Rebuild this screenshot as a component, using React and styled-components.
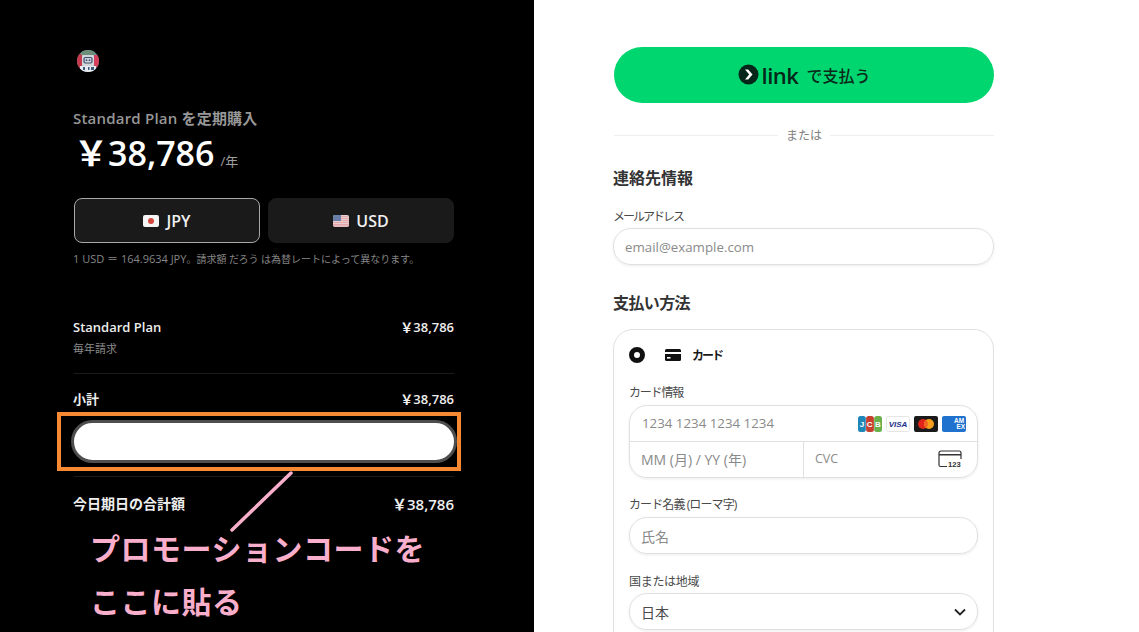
import React from "react";
import styled, { createGlobalStyle } from "styled-components";

const Global = createGlobalStyle`
  html, body { margin: 0; padding: 0; background: #fff; }
  body { font-family: "Open Sans", "Noto Sans CJK JP", sans-serif; }
  * { box-sizing: border-box; }
`;
const Page = styled.div`
  display: grid; grid-template-columns: 534px 1fr; width: 1139px; height: 632px; overflow: hidden;
`;
const Left = styled.section`
  background: #000; color: #fff; padding: 50px 80px 0 74px; height: 632px; position: relative;
`;
const Right = styled.section`
  background: #fff; padding: 47px 145px 0 80px; color: #1a1a1a; height: 632px; overflow: hidden;
`;
const AvatarWrap = styled.div`
  width: 22px; height: 22px; margin-left: 3px;
  svg { display: block; }
`;
const PlanTitle = styled.div`
  margin: 36px 0 0 -1px; height: 20px; line-height: 20px; font-size: 15px; font-weight: 600; letter-spacing: 0.2px; color: #979797;
`;
const PriceRow = styled.div`
  display: flex; align-items: baseline; margin: 5px 0 0 0; height: 40px; line-height: 40px;
`;
const Price = styled.span`
  font-size: 34px; font-weight: 600;
`;
const Per = styled.span`
  font-size: 13px; color: #a0a0a0; margin-left: 6px;
`;
const Toggle = styled.div`
  display: grid; grid-template-columns: 186px 186px; gap: 8px; margin-top: 25px;
`;
const Currency = styled.div`
  height: 45px; border-radius: 8px; background: #1a1a1a; display: flex; align-items: center; justify-content: center; gap: 7px;
  border: 1px solid ${p => (p.$active ? "#a8a8a8" : "#1a1a1a")};
  font-size: 16px; font-weight: 600; color: #f0f0f0;
  svg { display: block; }
`;
const Rate = styled.div`
  margin: 8px 0 0 -1px; height: 16px; line-height: 16px; font-size: 11px; color: #868686; white-space: nowrap;
`;
const RateCjk = styled.span`
  font-size: 10px;
`;
const LineRow = styled.div`
  display: flex; justify-content: space-between; align-items: center; height: 20px; line-height: 20px; margin-left: -1px;
  font-size: ${p => (p.$big ? 14 : 13)}px; font-weight: 600; color: #eee; margin-top: ${p => p.$top || 0}px;
`;
const Total = styled.span`
  font-size: 15px;
`;
const Sub = styled.div`
  font-size: 11px; color: #8b8b8b; margin: 4px 0 0 -1px; height: 16px; line-height: 16px;
`;
const Rule = styled.div`
  height: 1px; background: #1c1c1c; margin-top: ${p => p.$top}px;
`;
const Callout = styled.div`
  margin: 3px 0 0 -17px; height: 59px; border: 4px solid #f58a33; padding: 4px 0 0 10px; width: 404px;
`;
const PromoInput = styled.div`
  width: 386px; height: 43px; border-radius: 22px; background: #fff; border: 3px solid #4e4e4e;
`;
const Pointer = styled.svg`
  position: absolute; left: 228px; top: 470px; display: block;
`;
const Note = styled.div`
  position: absolute; left: 90px; top: 522px; font-size: 30px; letter-spacing: 0.5px; line-height: 53px; font-weight: 700; color: #f9afcb; white-space: nowrap;
`;
const LinkButton = styled.div`
  height: 56px; border-radius: 28px; background: #00d66f; display: flex; align-items: center; justify-content: center; gap: 3px; color: #0b2a1a; padding-bottom: 1px;
  svg { display: block; }
`;
const LinkWord = styled.span`
  font-size: 22px; font-weight: 600; color: #05271a; letter-spacing: -0.5px; line-height: 1;
`;
const LinkRest = styled.span`
  font-size: 16px; font-weight: 500; margin-left: 5px;
`;
const Or = styled.div`
  display: flex; align-items: center; gap: 8px; margin-top: 22px; height: 20px; font-size: 12px; color: #808080;
  &::before, &::after { content: ""; flex: 1; height: 1px; background: #eeeeee; }
`;
const Heading = styled.h2`
  margin: ${p => p.$top}px 0 0 -1px; height: 22px; line-height: 22px; font-size: 16px; font-weight: 600; color: #333;
  letter-spacing: ${p => p.$tight || 0}px;
`;
const Label = styled.div`
  font-size: 12px; height: 16px; line-height: 16px; color: #4a4a4a; margin-top: ${p => p.$top}px; white-space: nowrap;
  margin-left: ${p => p.$left || 0}px; letter-spacing: ${p => p.$tight || 0}px;
`;
const Input = styled.div`
  height: 37px; margin-top: ${p => p.$gap}px; border-radius: 18px; border: 1px solid #e0e0e0; box-shadow: 0 1px 3px rgba(0,0,0,.08);
  display: flex; align-items: center; justify-content: space-between; padding: ${p => (p.$latin ? "1px 11px 0 11px" : "0 11px")};
  font-size: ${p => (p.$latin ? 13.3 : 14)}px; color: #8a8a8a; margin-left: ${p => p.$left || 0}px;
`;
const PayBox = styled.div`
  margin: 15px 0 0 -1px; border: 1px solid #e0e0e0; border-radius: 20px; padding: 15px 15px 0; height: 340px;
`;
const PayHead = styled.div`
  display: flex; align-items: center; height: 20px;
  svg { display: block; }
`;
const PayName = styled.span`
  margin-left: 11px; font-size: 12px; letter-spacing: -2px; font-weight: 600; color: #1a1a1a;
`;
const Radio = styled.div`
  width: 16px; height: 16px; border-radius: 50%; border: 5px solid #111; margin-right: 20px;
`;
const CardGroup = styled.div`
  margin-top: 4px; border: 1px solid #e0e0e0; border-radius: 18px; box-shadow: 0 1px 3px rgba(0,0,0,.08); height: 73px; display: grid; grid-template-rows: 36px 36px; font-size: 14px; color: #8a8a8a;
`;
const CardTop = styled.div`
  display: flex; align-items: center; justify-content: space-between; padding: 0 11px 0 12px; border-bottom: 1px solid #e0e0e0;
`;
const CardNumber = styled.span`
  font-size: 13.3px; padding-bottom: 1px;
`;
const CardBottom = styled.div`
  display: grid; grid-template-columns: 173px 1fr;
`;
const Cell = styled.div`
  display: flex; align-items: center; justify-content: space-between; padding: 0 15px 3px 11px;
  & + & { border-left: 1px solid #e0e0e0; font-size: 12.5px; }
  svg { display: block; }
`;
const Logos = styled.div`
  display: flex; gap: 4px;
  svg { display: block; }
`;
const Value = styled.span`
  color: #4a4a4a;
`;

const Avatar = () => (
  <svg width="22" height="22" viewBox="0 0 22 22">
    <defs><clipPath id="av"><circle cx="11" cy="11" r="11" /></clipPath></defs>
    <g clipPath="url(#av)">
      <rect width="22" height="22" fill="#6d92a8" />
      <path d="M0 4h5v14H0z" fill="#c43a4c" />
      <path d="M17 5h5v12h-5z" fill="#d6405c" />
      <path d="M4 0h14v5H4z" fill="#6d8f78" />
      <rect x="5" y="5" width="12" height="11" rx="1" fill="#d2d5da" />
      <rect x="7" y="7.5" width="8" height="5.5" rx="1.5" fill="none" stroke="#3a4d70" strokeWidth="1.2" />
      <circle cx="9.5" cy="10.2" r=".9" fill="#3a4d70" />
      <circle cx="12.5" cy="10.2" r=".9" fill="#3a4d70" />
      <path d="M3 16h16v6H3z" fill="#e8eaef" />
      <path d="M6 17h2v3H6zM11 17h1.5v3H11zM14 17h3v3h-3z" fill="#3b5b7c" />
    </g>
  </svg>
);
const JpFlag = () => (
  <svg width="16" height="12" viewBox="0 0 16 12">
    <rect width="16" height="12" rx="2" fill="#f5f5f5" />
    <circle cx="8" cy="6" r="3" fill="#d5483f" />
  </svg>
);
const UsFlag = () => (
  <svg width="16" height="12" viewBox="0 0 16 12">
    <rect width="16" height="12" rx="2" fill="#f3f0f0" />
    <path d="M1 1.2h14M0 3.2h16M0 5.2h16M0 7.2h16M0 9.2h16M1 11h14" stroke="#d9868a" strokeWidth="1" />
    <path d="M2 0h6v6H0V2a2 2 0 0 1 2-2z" fill="#6a7fa8" />
  </svg>
);
const LinkMark = () => (
  <svg width="21" height="21" viewBox="0 0 21 21">
    <circle cx="10.5" cy="10.5" r="10" fill="#05271a" />
    <path d="M7 5.5h3.2l4.3 5-4.3 5H7l4.2-5z" fill="#fff" />
  </svg>
);
const CardIcon = () => (
  <svg width="16" height="12" viewBox="0 0 16 12">
    <path d="M1.5 0h13A1.5 1.5 0 0 1 16 1.5V3H0V1.5A1.5 1.5 0 0 1 1.5 0z" fill="#111" />
    <path d="M0 5h16v5.5a1.5 1.5 0 0 1-1.5 1.5h-13A1.5 1.5 0 0 1 0 10.5z" fill="#111" />
    <rect x="2" y="8" width="3.5" height="1.6" fill="#fff" />
  </svg>
);
const Jcb = () => (
  <svg width="24" height="16" viewBox="0 0 24 16" fontFamily="Liberation Sans" fontWeight="700" fontSize="8" fill="#fff">
    <rect x="0" y="0" width="7.8" height="16" rx="2.5" fill="#1f87b8" />
    <rect x="8.1" y="0" width="7.8" height="16" rx="2.5" fill="#c7402e" />
    <rect x="16.2" y="0" width="7.8" height="16" rx="2.5" fill="#6ab04c" />
    <text x="1.8" y="11">J</text>
    <text x="8.8" y="11">C</text>
    <text x="17" y="11">B</text>
  </svg>
);
const Visa = () => (
  <svg width="24" height="16" viewBox="0 0 24 16">
    <rect x=".5" y=".5" width="23" height="15" rx="2" fill="#fff" stroke="#e6e6e6" />
    <text x="12" y="11" textAnchor="middle" fontFamily="Liberation Sans" fontWeight="700" fontStyle="italic" fontSize="8" fill="#1a2f8a">VISA</text>
  </svg>
);
const Master = () => (
  <svg width="24" height="16" viewBox="0 0 24 16">
    <rect width="24" height="16" rx="2" fill="#1a1a1a" />
    <circle cx="9" cy="8" r="5" fill="#e2231a" />
    <circle cx="15" cy="8" r="5" fill="#f79e1b" />
    <path d="M12 4a5 5 0 0 1 0 8 5 5 0 0 1 0-8z" fill="#f26522" />
  </svg>
);
const Amex = () => (
  <svg width="24" height="16" viewBox="0 0 24 16" fontFamily="Liberation Sans" fontWeight="700" fontSize="6.5" fill="#fff">
    <rect width="24" height="16" rx="2" fill="#1f72cd" />
    <text x="12" y="7.2">AM</text>
    <text x="14.5" y="13.4">EX</text>
  </svg>
);
const Cvc = () => (
  <svg width="24" height="18" viewBox="0 0 24 18">
    <path d="M9 16.5H2.5A1.5 1.5 0 0 1 1 15V3a2 2 0 0 1 2-2h18a2 2 0 0 1 2 2v6" fill="none" stroke="#333" strokeWidth="1.2" />
    <rect x="1" y="4" width="22" height="1.5" fill="#333" />
    <text x="10" y="17" fontSize="7.6" fontWeight="700" fontFamily="Liberation Sans" fill="#333">123</text>
  </svg>
);
const Chevron = () => (
  <svg width="12" height="8" viewBox="0 0 12 8">
    <path d="M1 1.5l5 5 5-5" fill="none" stroke="#222" strokeWidth="1.8" />
  </svg>
);

export default function App() {
  return (
    <Page>
      <Global />
      <Left>
        <AvatarWrap><Avatar /></AvatarWrap>
        <PlanTitle>Standard Plan を定期購入</PlanTitle>
        <PriceRow><Price>￥38,786</Price><Per>/年</Per></PriceRow>
        <Toggle>
          <Currency $active><JpFlag />JPY</Currency>
          <Currency><UsFlag />USD</Currency>
        </Toggle>
        <Rate>1 USD ＝ 164.9634 JPY<RateCjk>。請求額 だろう は為替レートによって異なります。</RateCjk></Rate>
        <LineRow $top={50}><span>Standard Plan</span><span>￥38,786</span></LineRow>
        <Sub>毎年請求</Sub>
        <Rule $top={16} />
        <LineRow $top={15}><span>小計</span><span>￥38,786</span></LineRow>
        <Callout><PromoInput /></Callout>
        <Rule $top={5} />
        <LineRow $big $top={17}><span>今日期日の合計額</span><Total>￥38,786</Total></LineRow>
        <Pointer width="66" height="64" viewBox="0 0 66 64">
          <path d="M63 3L4 60" stroke="#f9afcb" strokeWidth="3.5" strokeLinecap="round" fill="none" />
        </Pointer>
        <Note>プロモーションコードを<br />ここに貼る</Note>
      </Left>
      <Right>
        <LinkButton><LinkMark /><LinkWord>link</LinkWord><LinkRest>で支払う</LinkRest></LinkButton>
        <Or>または</Or>
        <Heading $top={22}>連絡先情報</Heading>
        <Label $top={20} $left={-1} $tight={-2}>メールアドレス</Label>
        <Input $gap={3} $latin $left={-1}>email@example.com</Input>
        <Heading $top={27} $tight={-0.6}>支払い方法</Heading>
        <PayBox>
          <PayHead><Radio /><CardIcon /><PayName>カード</PayName></PayHead>
          <Label $top={20} $tight={-1.2}>カード情報</Label>
          <CardGroup>
            <CardTop>
              <CardNumber>1234 1234 1234 1234</CardNumber>
              <Logos><Jcb /><Visa /><Master /><Amex /></Logos>
            </CardTop>
            <CardBottom>
              <Cell>MM (月) / YY (年)</Cell>
              <Cell>CVC<Cvc /></Cell>
            </CardBottom>
          </CardGroup>
          <Label $top={19} $tight={-0.9}>カード名義 (ローマ字)</Label>
          <Input $gap={4}>氏名</Input>
          <Label $top={20} $tight={-0.3}>国または地域</Label>
          <Input $gap={3}><Value>日本</Value><Chevron /></Input>
        </PayBox>
      </Right>
    </Page>
  );
}
